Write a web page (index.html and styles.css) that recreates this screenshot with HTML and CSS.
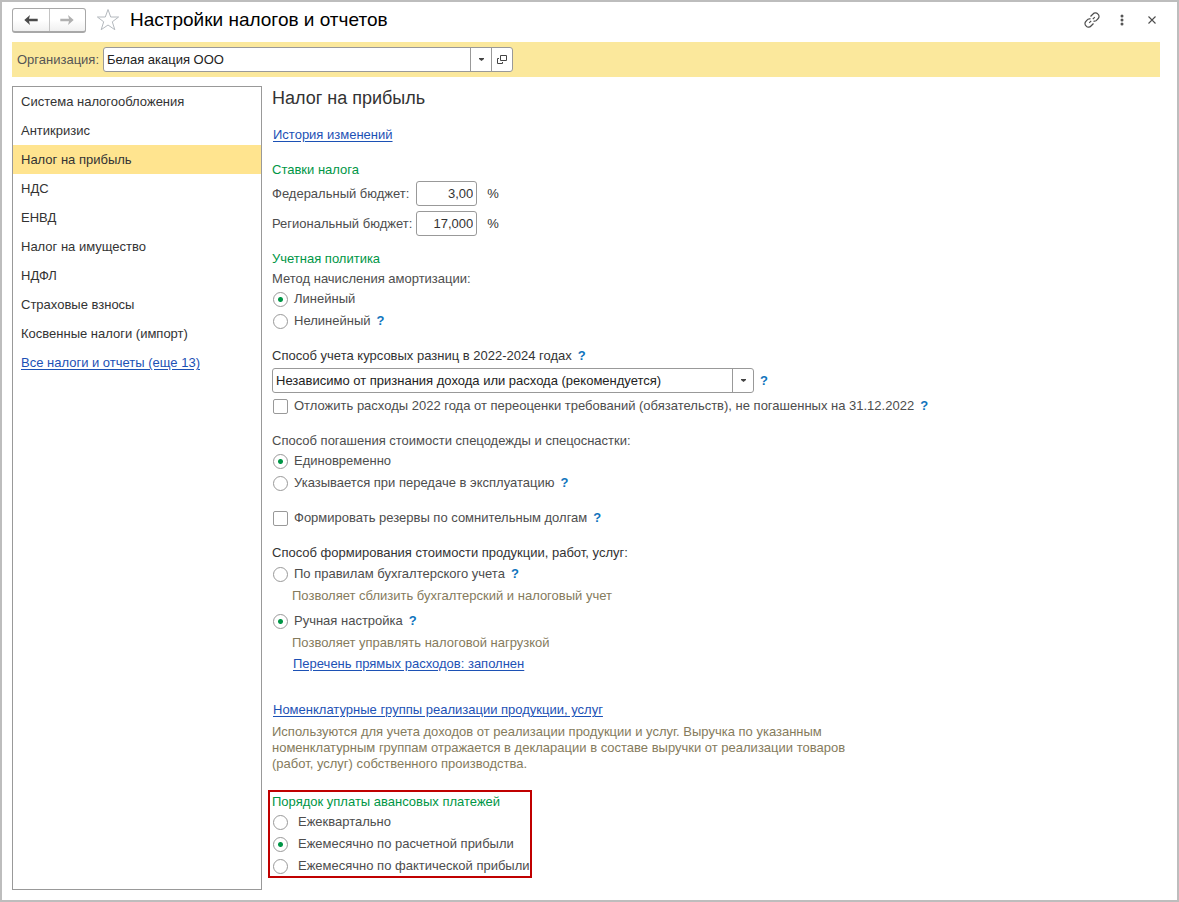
FILE: index.html
```html
<!DOCTYPE html>
<html lang="ru">
<head>
<meta charset="utf-8">
<meta name="viewport" content="width=device-width, initial-scale=1">
<title>Настройки налогов и отчетов</title>
<link rel="stylesheet" href="styles.css">
</head>
<body>
<div class="window">
  <header class="titlebar">
    <div class="history">
      <button type="button" aria-label="Назад"><svg width="14" height="12" viewBox="0 0 14 12"><path d="M6 1 0.3 6 6 11 5 7.200h8.700V4.800H5z" fill="#4a4a4a"/></svg></button>
      <button type="button" aria-label="Вперед" disabled><svg width="14" height="12" viewBox="0 0 14 12"><path d="M8 1 13.700 6 8 11 9 7.200H.3V4.800H9z" fill="#b0b0b0"/></svg></button>
    </div>
    <button type="button" class="icon-btn star" aria-label="В избранное"><svg width="24" height="24" viewBox="0 0 24 24"><path d="M12 1.500 14.700 9H22.600L16.300 13.800 18.800 21.700 12 17 5.200 21.700 7.700 13.800 1.400 9H9.300z" fill="#fff" stroke="#b4b9be"/></svg></button>
    <h1>Настройки налогов и отчетов</h1>
    <div class="tools">
      <button type="button" class="icon-btn" aria-label="Ссылка"><svg width="16" height="16" viewBox="0 0 16 16" fill="none" stroke="#4d4d4d" stroke-width="1.2"><path d="M6.500 4.500 9 2a3.200 3.200 0 0 1 4.800-.1 3.200 3.200 0 0 1 .2 4.900L12 8.800 9.500 9.300M9.500 11.500 7 14a3.200 3.200 0 0 1-4.800.1 3.200 3.200 0 0 1-.2-4.900L4 7.200 6.500 6.700M5.200 10.800 7.200 8.800M8.800 7.200 10.800 5.200"/></svg></button>
      <button type="button" class="icon-btn" aria-label="Еще"><svg width="16" height="16" viewBox="0 0 16 16" fill="#555"><circle cx="8" cy="4" r="1.500"/><circle cx="8" cy="8" r="1.500"/><circle cx="8" cy="12" r="1.500"/></svg></button>
      <button type="button" class="icon-btn" aria-label="Закрыть"><svg width="16" height="16" viewBox="0 0 16 16" stroke="#4d4d4d" stroke-width="1.100"><path d="M4.500 4.500 11.500 11.500M11.500 4.500 4.500 11.500"/></svg></button>
    </div>
  </header>

  <div class="org-bar">
    <label for="org">Организация:</label>
    <div class="combo org">
      <input id="org" type="text" value="Белая акация ООО">
      <button type="button" aria-label="Выбрать"><svg width="5" height="3" viewBox="0 0 5 3"><path d="M0 0h5v1L2.500 3 0 1z" fill="#444"/></svg></button>
      <button type="button" aria-label="Открыть"><svg width="10" height="10" viewBox="0 0 10 10" fill="none" stroke="#444"><path d="M3.500.5h6v5h-6zM2 3.500H.5v5h5V7"/></svg></button>
    </div>
  </div>

  <div class="body">
    <nav class="sidebar">
      <a href="#">Система налогообложения</a>
      <a href="#">Антикризис</a>
      <a href="#" class="active" aria-current="page">Налог на прибыль</a>
      <a href="#">НДС</a>
      <a href="#">ЕНВД</a>
      <a href="#">Налог на имущество</a>
      <a href="#">НДФЛ</a>
      <a href="#">Страховые взносы</a>
      <a href="#">Косвенные налоги (импорт)</a>
      <a href="#" class="all"><span class="link">Все налоги и отчеты (еще 13)</span></a>
    </nav>

    <main>
      <h2>Налог на прибыль</h2>
      <div class="line history-link"><a class="link" href="#">История изменений</a></div>

      <section>
        <h3>Ставки налога</h3>
        <div class="rates">
          <label for="fed">Федеральный бюджет:</label><input id="fed" type="text" value="3,00"><span>%</span>
          <label for="reg">Региональный бюджет:</label><input id="reg" type="text" value="17,000"><span>%</span>
        </div>
      </section>

      <section class="policy">
        <h3>Учетная политика</h3>
        <div class="line muted">Метод начисления амортизации:</div>
        <div class="options">
          <div class="option"><input type="radio" name="amort" id="a1" checked><label for="a1">Линейный</label></div>
          <div class="option"><input type="radio" name="amort" id="a2"><label for="a2">Нелинейный</label><a class="help" href="#">?</a></div>
        </div>
      </section>

      <section>
        <div class="line"><label for="diff">Способ учета курсовых разниц в 2022-2024 годах</label><a class="help" href="#">?</a></div>
        <div class="select-row">
          <div class="combo diff">
            <select id="diff"><option>Независимо от признания дохода или расхода (рекомендуется)</option></select>
            <span class="arrow"><svg width="5" height="3" viewBox="0 0 5 3"><path d="M0 0h5v1L2.500 3 0 1z" fill="#444"/></svg></span>
          </div>
          <a class="help" href="#">?</a>
        </div>
        <div class="option"><input type="checkbox" id="c1"><label for="c1">Отложить расходы 2022 года от переоценки требований (обязательств), не погашенных на 31.12.2022</label><a class="help" href="#">?</a></div>
      </section>

      <section>
        <div class="line muted">Способ погашения стоимости спецодежды и спецоснастки:</div>
        <div class="options">
          <div class="option"><input type="radio" name="wear" id="w1" checked><label for="w1">Единовременно</label></div>
          <div class="option"><input type="radio" name="wear" id="w2"><label for="w2">Указывается при передаче в эксплуатацию</label><a class="help" href="#">?</a></div>
        </div>
      </section>

      <section>
        <div class="option"><input type="checkbox" id="c2"><label for="c2">Формировать резервы по сомнительным долгам</label><a class="help" href="#">?</a></div>
      </section>

      <section>
        <div class="line">Способ формирования стоимости продукции, работ, услуг:</div>
        <div class="cost">
          <div class="choice">
            <div class="option"><input type="radio" name="cost" id="k1"><label for="k1">По правилам бухгалтерского учета</label><a class="help" href="#">?</a></div>
            <p class="hint">Позволяет сблизить бухгалтерский и налоговый учет</p>
          </div>
          <div class="choice">
            <div class="option"><input type="radio" name="cost" id="k2" checked><label for="k2">Ручная настройка</label><a class="help" href="#">?</a></div>
            <p class="hint">Позволяет управлять налоговой нагрузкой</p>
            <div class="line direct"><a class="link" href="#">Перечень прямых расходов: заполнен</a></div>
          </div>
        </div>
      </section>

      <section class="groups">
        <div class="line groups-link"><a class="link" href="#">Номенклатурные группы реализации продукции, услуг</a></div>
        <p class="note">Используются для учета доходов от реализации продукции и услуг. Выручка по указанным номенклатурным группам отражается в декларации в составе выручки от реализации товаров (работ, услуг) собственного производства.</p>
      </section>

      <section class="advance">
        <h3>Порядок уплаты авансовых платежей</h3>
        <div class="options">
          <div class="option"><input type="radio" name="adv" id="p1"><label for="p1">Ежеквартально</label></div>
          <div class="option"><input type="radio" name="adv" id="p2" checked><label for="p2">Ежемесячно по расчетной прибыли</label></div>
          <div class="option"><input type="radio" name="adv" id="p3"><label for="p3">Ежемесячно по фактической прибыли</label></div>
        </div>
      </section>
    </main>
  </div>
</div>
</body>
</html>
```

FILE: styles.css
```css
* { box-sizing: border-box; }
body {
  margin: 0;
  font: 13px/20px "Liberation Sans", Arial, sans-serif;
  color: #333;
  background: #fff;
}
h1, h2, h3, p { margin: 0; font-weight: 400; }
input, select, button { font: inherit; color: inherit; margin: 0; }
button { padding: 0; border: 0; background: none; }
svg { display: block; }

.window {
  min-height: 100vh;
  border: 2px solid #bdbdbd;
  padding: 0 17px 10px 10px;
  display: flex;
  flex-direction: column;
}

.titlebar { display: flex; align-items: center; height: 40px; padding-bottom: 4px; }
.history {
  display: flex;
  width: 74px;
  height: 25px;
  border: 1px solid #a8a8a8;
  border-bottom-width: 2px;
  border-radius: 3px;
  background: linear-gradient(#fff 50%, #f0f0f0);
}
.history button { flex: 1; display: grid; place-items: center; }
.history button + button { border-left: 1px solid #c4c4c4; }
.icon-btn { display: grid; place-items: center; width: 30px; height: 24px; }
.star { width: 24px; margin-left: 10px; }
h1 { margin-left: 10px; font-size: 19px; line-height: 24px; color: #000; }
.tools { display: flex; margin-left: auto; margin-right: -7px; }

.org-bar {
  display: flex;
  align-items: center;
  gap: 4px;
  height: 35px;
  padding-left: 5px;
  background: #fbe89c;
  color: #555;
}
.combo {
  display: flex;
  height: 25px;
  border: 1px solid #999;
  border-radius: 3px;
  background: #fff;
  color: #222;
}
.combo input, .combo select {
  flex: 1;
  min-width: 0;
  padding: 0 3px;
  border: 0;
  background: none;
  appearance: none;
}
.combo button, .combo .arrow {
  display: grid;
  place-items: center;
  width: 21px;
  border-left: 1px solid #999;
}
.org { width: 410px; }
.diff { width: 482px; }

.body { flex: 1; display: flex; gap: 10px; padding-top: 9px; }
.sidebar { width: 250px; flex: none; border: 1px solid #999; }
.sidebar a {
  display: block;
  padding: 0 8px;
  line-height: 29px;
  color: #333;
  text-decoration: none;
}
.sidebar .active { background: #ffe48f; }
.link, .sidebar .link { color: #1c51b5; text-decoration: underline; text-underline-offset: 2px; }

main { flex: 1; min-width: 0; }
h2 { font-size: 18px; line-height: 24px; }
h3 { font-size: 13px; line-height: 20px; color: #009646; }
.history-link, .groups-link { padding-left: 1px; }
.history-link { margin-top: 15px; }
section { margin-top: 15px; }
.policy { margin-top: 13px; }
.muted { color: #4d4d4d; }

.rates {
  display: grid;
  grid-template-columns: max-content 61px auto;
  justify-content: start;
  align-items: center;
  gap: 5px 4px;
  margin-top: 1px;
}
.rates label { color: #4d4d4d; }
.rates input {
  width: 61px;
  height: 25px;
  padding: 0 3px;
  border: 1px solid #999;
  border-radius: 3px;
  text-align: right;
}
.rates span { padding-left: 6px; }

.options { display: grid; gap: 2px; }
.option { display: flex; align-items: center; padding-left: 1px; color: #4d4d4d; }
.option input {
  appearance: none;
  flex: none;
  width: 15px;
  height: 15px;
  margin-right: 6px;
  border: 1px solid #999;
  border-radius: 2px;
  background: #fff;
}
.option input[type="radio"] { border-radius: 50%; }
.option input[type="radio"]:checked { background: radial-gradient(circle, #009646 2px, #fff 3px); }
.help { margin-left: 6px; color: #0f74bd; font-weight: 700; text-decoration: none; }

.select-row { display: flex; align-items: center; margin: 2px 0 3px; }
.cost { display: grid; gap: 5px; margin-top: 1px; }
.hint, .note { color: #857b5c; }
.hint { padding-left: 20px; margin-top: 2px; }
.direct { padding-left: 21px; margin-top: 1px; }
.groups { margin-top: 26px; }
.note { max-width: 580px; margin-top: 4px; line-height: 16px; }
.advance {
  width: max-content;
  margin: 18px 0 0 -4px;
  padding: 0 0 0 2px;
  border: 2px solid #c00000;
}
.advance .option input { margin-right: 10px; }
```
